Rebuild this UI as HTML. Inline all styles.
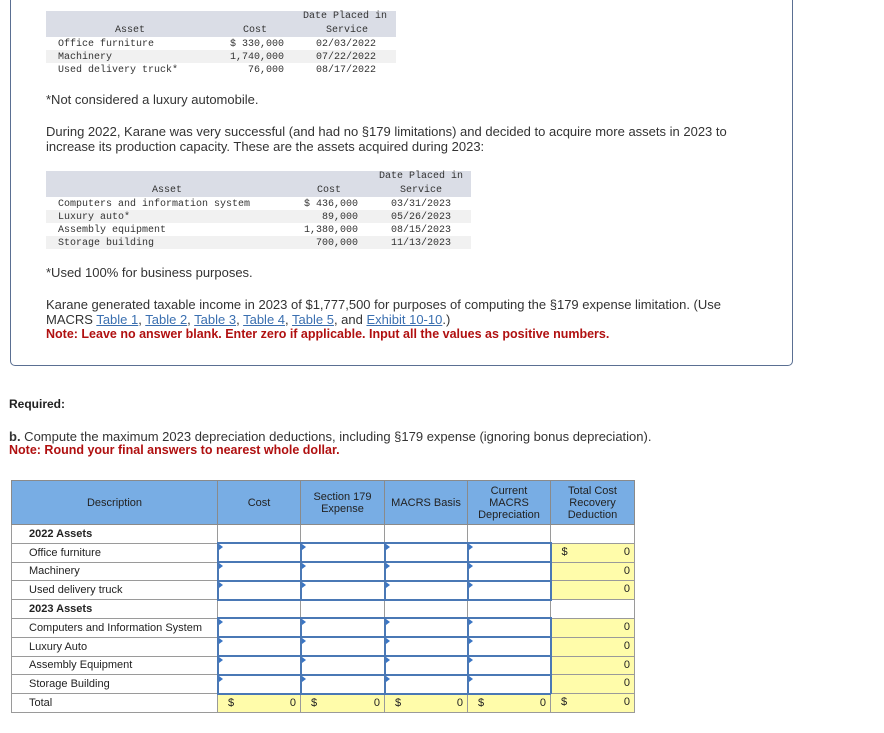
<!DOCTYPE html>
<html><head><style>
body{margin:0;width:884px;height:733px;background:#fff;position:relative;overflow:hidden;font-family:"Liberation Sans",Arial,sans-serif;color:#333}
.a{position:absolute;white-space:nowrap}
.box{position:absolute;left:10px;top:-10px;width:781px;height:374px;border:1px solid #5a6f92;border-radius:5px}
.m{font-family:"Liberation Mono",monospace;font-size:10px;color:#333}
.hd{background:#dadde6;position:absolute}
.st{background:#f1f1f1;position:absolute}
.t{font-size:13px;color:#333}
.red{color:#b01010;font-weight:bold;font-size:12.5px}
a{color:#3a6fb0;text-decoration:underline}
table{position:absolute;left:11px;top:480px;border-collapse:collapse;font-size:11px;color:#222;table-layout:fixed;width:623px}
td{border:1px solid #9a9a9a;height:18.8px;padding:0;box-sizing:border-box}
th{background:#78ade4;border:1px solid #8a8a8a;font-weight:normal;font-size:11px;color:#222;height:44px;line-height:12px;padding:0;box-sizing:border-box}
td.l{padding-left:17px;white-space:nowrap;overflow:hidden}
td.in{border:2px solid #4a78b5;position:relative}
td.in:before{content:"";position:absolute;left:0;top:0;border-left:4px solid #3a75c4;border-top:3px solid transparent;border-bottom:3px solid transparent}
td.y{background:#fffcaa;position:relative}
td.y span{position:absolute;right:4px;top:2px}
td.y i{position:absolute;left:10px;top:2px;font-style:normal}
</style></head><body>
<div class="box"></div>
<div class="hd" style="left:46px;top:11px;width:350px;height:26px"></div>
<div class="st" style="left:46px;top:50px;width:350px;height:13px"></div>
<div class="a m" style="left:115px;top:25px">Asset</div>
<div class="a m" style="left:243px;top:25px">Cost</div>
<div class="a m" style="left:303px;top:11px">Date Placed in</div>
<div class="a m" style="left:326px;top:25px">Service</div>
<div class="a m" style="left:58px;top:38px;line-height:13px">Office furniture<br>Machinery<br>Used delivery truck*</div>
<div class="a m" style="left:229px;top:38px;line-height:13px;text-align:right;width:55px">$ 330,000<br>1,740,000<br>76,000</div>
<div class="a m" style="left:316px;top:38px;line-height:13px">02/03/2022<br>07/22/2022<br>08/17/2022</div>
<div class="a t" style="left:46px;top:92px">*Not considered a luxury automobile.</div>
<div class="a t" style="left:46px;top:124px;line-height:15px">During 2022, Karane was very successful (and had no §179 limitations) and decided to acquire more assets in 2023 to<br>increase its production capacity. These are the assets acquired during 2023:</div>
<div class="hd" style="left:46px;top:171px;width:425px;height:26px"></div>
<div class="st" style="left:46px;top:210px;width:425px;height:13px"></div>
<div class="st" style="left:46px;top:236px;width:425px;height:13px"></div>
<div class="a m" style="left:152px;top:185px">Asset</div>
<div class="a m" style="left:317px;top:185px">Cost</div>
<div class="a m" style="left:379px;top:171px">Date Placed in</div>
<div class="a m" style="left:400px;top:185px">Service</div>
<div class="a m" style="left:58px;top:198px;line-height:13px">Computers and information system<br>Luxury auto*<br>Assembly equipment<br>Storage building</div>
<div class="a m" style="left:300px;top:198px;line-height:13px;text-align:right;width:58px">$ 436,000<br>89,000<br>1,380,000<br>700,000</div>
<div class="a m" style="left:391px;top:198px;line-height:13px">03/31/2023<br>05/26/2023<br>08/15/2023<br>11/13/2023</div>
<div class="a t" style="left:46px;top:265px">*Used 100% for business purposes.</div>
<div class="a t" style="left:46px;top:297px;line-height:15px">Karane generated taxable income in 2023 of $1,777,500 for purposes of computing the §179 expense limitation. (Use<br>MACRS <a>Table 1</a>, <a>Table 2</a>, <a>Table 3</a>, <a>Table 4</a>, <a>Table 5</a>, and <a>Exhibit 10-10</a>.)</div>
<div class="a red" style="left:46px;top:327px">Note: Leave no answer blank. Enter zero if applicable. Input all the values as positive numbers.</div>
<div class="a" style="left:9px;top:397px;font-size:12px;font-weight:bold;color:#222">Required:</div>
<div class="a t" style="left:9px;top:429px"><b>b.</b> Compute the maximum 2023 depreciation deductions, including §179 expense (ignoring bonus depreciation).</div>
<div class="a red" style="left:9px;top:443px">Note: Round your final answers to nearest whole dollar.</div>
<table>
<colgroup><col style="width:206px"><col style="width:83px"><col style="width:84px"><col style="width:83px"><col style="width:83px"><col style="width:84px"></colgroup>
<tr><th>Description</th><th>Cost</th><th>Section 179<br>Expense</th><th>MACRS Basis</th><th>Current<br>MACRS<br>Depreciation</th><th>Total Cost<br>Recovery<br>Deduction</th></tr>
<tr><td class="l" style="font-weight:bold">2022 Assets</td><td></td><td></td><td></td><td></td><td></td></tr>
<tr><td class="l">Office furniture</td><td class="in"></td><td class="in"></td><td class="in"></td><td class="in"></td><td class="y"><i>$</i><span>0</span></td></tr>
<tr><td class="l">Machinery</td><td class="in"></td><td class="in"></td><td class="in"></td><td class="in"></td><td class="y"><span>0</span></td></tr>
<tr><td class="l">Used delivery truck</td><td class="in"></td><td class="in"></td><td class="in"></td><td class="in"></td><td class="y"><span>0</span></td></tr>
<tr><td class="l" style="font-weight:bold">2023 Assets</td><td></td><td></td><td></td><td></td><td></td></tr>
<tr><td class="l">Computers and Information System</td><td class="in"></td><td class="in"></td><td class="in"></td><td class="in"></td><td class="y"><span>0</span></td></tr>
<tr><td class="l">Luxury Auto</td><td class="in"></td><td class="in"></td><td class="in"></td><td class="in"></td><td class="y"><span>0</span></td></tr>
<tr><td class="l">Assembly Equipment</td><td class="in"></td><td class="in"></td><td class="in"></td><td class="in"></td><td class="y"><span>0</span></td></tr>
<tr><td class="l">Storage Building</td><td class="in"></td><td class="in"></td><td class="in"></td><td class="in"></td><td class="y"><span>0</span></td></tr>
<tr><td class="l">Total</td><td class="y"><i>$</i><span>0</span></td><td class="y"><i>$</i><span>0</span></td><td class="y"><i>$</i><span>0</span></td><td class="y"><i>$</i><span>0</span></td><td class="y"><i>$</i><span>0</span></td></tr>
</table>
</body></html>
